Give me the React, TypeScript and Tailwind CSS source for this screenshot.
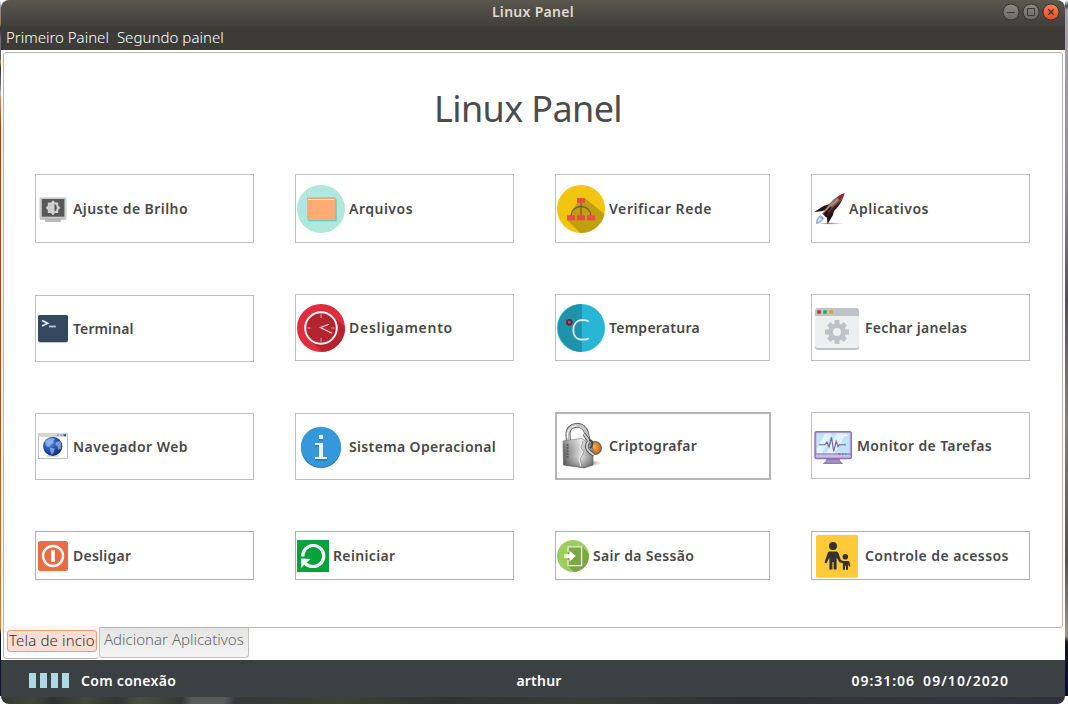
import type { ReactNode } from 'react';

const FONT = "font-['Noto_Sans','Open_Sans',sans-serif]";

function BrightnessIcon() {
  return (
    <svg className="size-8 shrink-0" viewBox="0 0 32 32">
      <rect x="8" y="26" width="16" height="2.5" rx="1" fill="#c4c4c4" />
      <path d="M8 28.3h16" stroke="#999" strokeWidth=".7" />
      <rect x="2.5" y="4.3" width="27" height="22" rx="1" fill="#cfcfcf" />
      <path d="M3 26h26" stroke="#999" strokeWidth=".8" />
      <rect x="4.8" y="6" width="22.6" height="17.7" fill="#585858" />
      <path d="M16 7.2l2.2 2.3h3v3l2.2 2.2-2.2 2.2v3h-3L16 22.2l-2.2-2.3h-3v-3l-2.2-2.2 2.2-2.2v-3h3z" fill="#cfcfcf" />
      <path d="M17.5 11c3 .8 3 6.800 0 7.600z" fill="#585858" />
    </svg>
  );
}

function FilesIcon() {
  return (
    <svg className="size-12 shrink-0" viewBox="0 0 48 48">
      <circle cx="24" cy="24" r="24" fill="#afe8dc" />
      <rect x="11.3" y="14.3" width="28.5" height="22" fill="#6fcbbb" />
      <rect x="10" y="13" width="28.4" height="22" fill="#ffab73" />
      <path d="M10 13h28.4" stroke="#ef9358" strokeWidth=".8" />
      <path d="M11 14.5h26.5" stroke="#fff0e4" strokeWidth="1" />
    </svg>
  );
}

function NetworkIcon() {
  return (
    <svg className="size-12 shrink-0" viewBox="0 0 48 48">
      <clipPath id="net"><circle cx="24" cy="24" r="24" /></clipPath>
      <circle cx="24" cy="24" r="24" fill="#f1c510" />
      <path d="M27.7 13L50 31v20H26.5L10 35l10-17z" fill="#c09e0e" clipPath="url(#net)" />
      <path d="M14.2 31v-1a9.8 8.5 0 0 1 19.6 0v1M24 17v14" fill="none" stroke="#7b5a42" strokeWidth="1.3" />
      <g fill="#e84c42">
        <rect x="20" y="13" width="8" height="4.8" />
        <rect x="10" y="30.3" width="8" height="5" />
        <rect x="20" y="30.3" width="8" height="5" />
        <rect x="30" y="30.3" width="8" height="5" />
      </g>
    </svg>
  );
}

function RocketIcon() {
  return (
    <svg className="size-8 shrink-0" viewBox="0 0 32 32">
      <defs>
        <linearGradient id="hull" x1=".3" y1=".25" x2=".7" y2=".75">
          <stop offset="0" stopColor="#2c1214" />
          <stop offset=".4" stopColor="#b08f8c" />
          <stop offset=".65" stopColor="#4a1d1e" />
          <stop offset="1" stopColor="#170c0d" />
        </linearGradient>
        <radialGradient id="ground">
          <stop offset="0" stopColor="#8d8d8d" />
          <stop offset="1" stopColor="#fff" />
        </radialGradient>
      </defs>
      <ellipse cx="17" cy="30.5" rx="13" ry="1.2" fill="url(#ground)" />
      <path d="M7.500 22l3.500 3c-1 3-3.500 5.300-8 6-.3-3.800 1.500-7 4.500-9z" fill="#93a8d6" />
      <path d="M7 24.5l1.800 1.300c-.8 1.700-2.300 2.700-4.300 3.200.2-2 1-3.500 2.500-4.500z" fill="#dfeaff" />
      <path d="M18.5 10.5L11 12.8 1 19l7.500-.8 6-2zM21.500 15L20 22l-5.500 9.300-.8-9 3-5z" fill="#241214" />
      <path d="M31.700.3C30.500 5.500 27 12 22.500 16.500l-9 8-4.500-3.800 6-8.200C19.500 7 25.500 2 31.700.3z" fill="url(#hull)" />
      <path d="M31.700.3c-3 .9-5.700 2.400-8 4.200l3.300 3.200c2-2.500 3.800-4.700 4.700-7.400z" fill="#8f2c2b" />
      <path d="M18 14l-7 7.500M14.500 18.500l-2 5" stroke="#1d0e10" strokeWidth="1.5" />
    </svg>
  );
}

function TerminalIcon() {
  return (
    <svg className="size-8 shrink-0" viewBox="0 0 32 32">
      <rect x="1" y="2.5" width="30" height="27.5" rx="2" fill="#c9ccd0" />
      <rect x="1" y="2" width="30" height="27" rx="2" fill="#2c3e50" />
      <rect x="1" y="2.3" width="30" height="25.7" rx="2" fill="#34495e" />
      <path d="M5 7.5l5.800 2.800L5 13" fill="none" stroke="#ecf0f1" strokeWidth="1.5" />
      <path d="M12 13.500h6.800" stroke="#bdc9d0" strokeWidth="1.8" />
    </svg>
  );
}

function ClockIcon() {
  return (
    <svg className="size-12 shrink-0" viewBox="0 0 48 48">
      <clipPath id="clk"><circle cx="24" cy="24" r="24" /></clipPath>
      <circle cx="24" cy="24" r="24" fill="#e02d3d" />
      <path d="M35 12l15 13v25H27.5L12 35z" fill="#b5232f" clipPath="url(#clk)" />
      <circle cx="24" cy="24" r="15.8" fill="#b5232f" stroke="#fff" strokeWidth="1.9" />
      <path d="M24 10v4M24 34v4M10 24h4M34 24h4" stroke="#c9747c" strokeWidth="1.6" />
      <path d="M32 20.2l-8.500 3.300L35 29.200" fill="none" stroke="#f6dfe1" strokeWidth="1.2" />
    </svg>
  );
}

function TemperatureIcon() {
  return (
    <svg className="size-12 shrink-0" viewBox="0 0 48 48">
      <circle cx="24" cy="24" r="24" fill="#27b6d3" />
      <path d="M24.8 0A24 24 0 1 0 24.800 48z" fill="#1f93ab" />
      <circle cx="12.3" cy="18.3" r="2.4" fill="none" stroke="#8e1620" strokeWidth="1.9" />
      <path d="M31.8 17.500c-1.500-1-3.500-1.500-6-1.500-6 0-9.500 4-9.500 10s3.500 9.700 9.500 9.700c2.500 0 4.500-.5 6-1.500" fill="none" stroke="#dfe7ea" strokeWidth="1.8" />
    </svg>
  );
}

function WindowGearIcon() {
  return (
    <svg className="size-12 shrink-0" viewBox="0 0 48 48">
      <rect x="2" y="6" width="44" height="40" rx="3" fill="#bdc3c7" />
      <path d="M2 12h44v29a3 3 0 0 1-3 3H5a3 3 0 0 1-3-3z" fill="#ecf0f1" />
      <path d="M2 12V7a3 3 0 0 1 3-3h38a3 3 0 0 1 3 3v5z" fill="#bdc3c7" />
      <circle cx="6" cy="8" r="2" fill="#c0392b" />
      <circle cx="12" cy="8" r="2" fill="#27ae60" />
      <circle cx="18" cy="8" r="2" fill="#f39c12" />
      <g stroke="#bdc3c7" strokeWidth="5">
        <path d="M24 16v24M12 28h24M15.700 19.700l16.600 16.600M32.300 19.700L15.700 36.300" />
      </g>
      <circle cx="24" cy="28" r="8.8" fill="#bdc3c7" />
      <circle cx="24" cy="28" r="4" fill="#ecf0f1" />
    </svg>
  );
}

function BrowserIcon() {
  return (
    <svg className="size-8 shrink-0" viewBox="0 0 32 32">
      <defs>
        <radialGradient id="globe" cx=".35" cy=".3" r=".8">
          <stop offset="0" stopColor="#6e9ce6" />
          <stop offset=".45" stopColor="#2757b4" />
          <stop offset="1" stopColor="#0a2468" />
        </radialGradient>
      </defs>
      <rect x="1.5" y="2.5" width="29" height="25" fill="#fff" stroke="#bdbdbd" />
      <rect x="1.5" y="2" width="29" height="4" fill="#d6d6d6" />
      <path d="M20 4.200h2M23.500 4.200h2" stroke="#7f9fc9" strokeWidth="1.8" />
      <path d="M26.500 4.200h2.500" stroke="#1c4fae" strokeWidth="2" />
      <ellipse cx="15.7" cy="25" rx="7" ry="1.2" fill="#d5d5dd" />
      <circle cx="15.7" cy="15.3" r="9.6" fill="url(#globe)" />
      <path d="M8 11c2-3 5-4.300 8-4l2 1.500-2 1.500 1 1.500-3 2-2 2.500-3-1zM13 16.500l4.500 1-.5 3.500-2 3c-1.500-1.500-2-4.500-2-7.500zM19 11l4-1 1.500 3.500-.5 4-2.500 1.500-1-3.500-2-1.500z" fill="#a6c5f0" opacity=".65" />
    </svg>
  );
}

function InfoIcon() {
  return (
    <svg className="size-12 shrink-0" viewBox="0 0 48 48">
      <circle cx="24" cy="25" r="20" fill="#2980b9" />
      <circle cx="24" cy="23.7" r="20" fill="#3498db" />
      <g fill="#2980b9">
        <rect x="22" y="13.5" width="4" height="4" />
        <rect x="18" y="34" width="12" height="4" />
        <rect x="18" y="21" width="4" height="2.5" />
      </g>
      <g fill="#ecf0f1">
        <rect x="22" y="12" width="4" height="4" />
        <rect x="18" y="20" width="8" height="2" />
        <rect x="22" y="20" width="4" height="14" />
        <rect x="18" y="34" width="12" height="2" />
      </g>
    </svg>
  );
}

function PadlockIcon() {
  return (
    <svg className="size-12 shrink-0" viewBox="0 0 48 48">
      <defs>
        <linearGradient id="steel" x1="0" y1="0" x2="1" y2="0">
          <stop offset="0" stopColor="#5a5a5a" />
          <stop offset=".25" stopColor="#9d9d9d" />
          <stop offset=".6" stopColor="#e2e2e2" />
          <stop offset="1" stopColor="#808080" />
        </linearGradient>
        <linearGradient id="shade" x1="0" y1="0" x2="0" y2="1">
          <stop offset="0" stopColor="#fff" stopOpacity=".4" />
          <stop offset=".6" stopColor="#777" stopOpacity="0" />
          <stop offset="1" stopColor="#222" stopOpacity=".45" />
        </linearGradient>
        <radialGradient id="amber" cx=".4" cy=".4">
          <stop offset="0" stopColor="#ffb04d" />
          <stop offset="1" stopColor="#d86f14" />
        </radialGradient>
        <radialGradient id="fall">
          <stop offset="0" stopColor="#999" />
          <stop offset="1" stopColor="#fff" />
        </radialGradient>
      </defs>
      <ellipse cx="34" cy="41" rx="11" ry="3" fill="url(#fall)" />
      <circle cx="38" cy="26" r="6.3" fill="url(#amber)" stroke="#666" strokeWidth="1.3" />
      <path d="M11.500 20l-.5-7c-.5-12 16-13 18.500-2l1.500 7" fill="none" stroke="#5d5d5d" strokeWidth="5" />
      <path d="M11.500 20l-.5-7c-.5-12 16-13 18.500-2l1.500 7" fill="none" stroke="#c4c4c4" strokeWidth="3.4" />
      <path d="M10.500 16v-4c.5-5 4-8 9-8.300" fill="none" stroke="#fff" strokeWidth="1" />
      <path d="M6 19l19-2.500L31 21l5 5v17l-9 3L6.500 43z" fill="url(#steel)" stroke="#5a5a5a" strokeWidth=".6" />
      <path d="M6 19l19-2.500L31 21l5 5v17l-9 3L6.500 43z" fill="url(#shade)" />
      <path d="M10.500 22v14" stroke="#66605a" strokeWidth="2" strokeDasharray="2 1" />
      <path d="M25 19l-2 7 3 4-4 7 2 7" fill="none" stroke="#f0f0f0" strokeWidth="1.2" />
      <path d="M26 19l-2 7 3 4-4 7 2 7" fill="none" stroke="#777" strokeWidth=".6" />
      <path d="M27 12l5 7c-3 4-3 8 1 11l4 3" fill="none" stroke="#555" strokeWidth="3.6" />
      <path d="M27 12l5 7c-3 4-3 8 1 11l4 3" fill="none" stroke="#ccc" strokeWidth="2" />
      <path d="M32 18c5 1 4 6 1 8" fill="none" stroke="#454545" strokeWidth="1.8" />
    </svg>
  );
}

function MonitorIcon() {
  return (
    <svg className="size-10 shrink-0" viewBox="0 0 40 40">
      <path d="M14 33h12l1 2.500 2.500 2h-19L13 35.500z" fill="#a48fc0" stroke="#7d669f" strokeWidth=".8" />
      <rect x="2" y="5.8" width="36.3" height="26.7" rx="1.8" fill="#c9bdea" stroke="#8972ad" strokeWidth="1.4" />
      <rect x="3.8" y="7.5" width="32.7" height="19.7" fill="#c1e3fa" />
      <path d="M12 7.500h7L9 27.200H4V23zM24 7.500h9L22 27.200h-9z" fill="#e1f3ff" />
      <path d="M2 28h36" stroke="#8972ad" strokeWidth=".9" />
      <path d="M6 18.700h6l2-2.700 2 5 2.500-9.700 2.200 14 2.500-10 1.800 5.500 1.300-2H33" fill="none" stroke="#76609c" strokeWidth="1.1" />
      <path d="M25 28h2.500" stroke="#e05a6c" strokeWidth="2" />
      <path d="M29 28h1.500" stroke="#36aaa5" strokeWidth="2" />
      <path d="M32 28h1.500" stroke="#4e9cda" strokeWidth="2" />
      <path d="M32 9.200h2.500" stroke="#fff" strokeWidth="1.5" />
    </svg>
  );
}

function PowerIcon() {
  return (
    <svg className="size-8 shrink-0" viewBox="0 0 32 32">
      <rect x="1" y="1" width="30" height="30" rx="2.5" fill="#e96a43" />
      <circle cx="16" cy="16" r="10" fill="none" stroke="#fff" strokeWidth="2.4" />
      <path d="M16 10.300v11.700" stroke="#fff" strokeWidth="3.6" />
    </svg>
  );
}

function RestartIcon() {
  return (
    <svg className="size-8 shrink-0" viewBox="0 0 32 32">
      <rect width="32" height="32" fill="#06a23c" />
      <path d="M5.800 16.500A10.500 10.500 0 1 1 16.300 26.500c-3.500 0-6-1-8-3" fill="none" stroke="#fff" strokeWidth="3.2" />
      <path d="M4 18.500l9.500.5L4 28z" fill="#fff" />
    </svg>
  );
}

function ExitIcon() {
  return (
    <svg className="size-8 shrink-0" viewBox="0 0 32 32">
      <clipPath id="out"><circle cx="16" cy="16" r="16" /></clipPath>
      <circle cx="16" cy="16" r="16" fill="#9bcf5c" />
      <path d="M25 6.500l8 8V33H18l-7.500-7.500z" fill="#7ca64a" clipPath="url(#out)" />
      <path d="M11 12V6.800h13.600v18.800H11V20" fill="#7ca64a" stroke="#e4efd8" strokeWidth="1.3" />
      <path d="M7.200 14.200h5.300v-3.500l6.200 5.300-6.200 5.400v-3.500H7.200z" fill="#fff" />
    </svg>
  );
}

function ParentalIcon() {
  return (
    <svg className="size-12 shrink-0" viewBox="0 0 48 48">
      <rect x="3" y="4" width="42" height="42" rx="1.5" fill="#d5d5d5" />
      <rect x="3" y="3" width="42" height="42" rx="1.5" fill="#ffca38" />
      <g fill="#333">
        <circle cx="20" cy="14" r="4" />
        <path d="M17 19.500h6c1.300 0 2 .6 2.400 1.800l3 8.200-1.800 1-3-5V37.500h-3V30h-1.200v7.500h-3V25.500l-3 6-1.900-1 3.100-9.200c.4-1.200 1.100-1.800 2.400-1.800z" />
        <circle cx="32.3" cy="24.7" r="2.8" />
        <path d="M28 28.300l2.500.7h4.200c1 0 1.500.4 1.800 1.200l1 4-1.200.5-1.300-2.500v5.500h-2v-4h-.9v4h-2.200v-6.500l-3-1z" />
      </g>
    </svg>
  );
}

type Launcher = { label: string; icon: ReactNode; box: string; text: string };

const columns: { width: string; items: Launcher[] }[] = [
  {
    width: 'w-[219px] mr-[41px]',
    items: [
      { label: 'Ajuste de Brilho', icon: <BrightnessIcon />, box: 'h-[69px] mb-[52px]', text: 'tracking-[0.43px]' },
      { label: 'Terminal', icon: <TerminalIcon />, box: 'h-[67px] mb-[51px]', text: 'tracking-[0.1px]' },
      { label: 'Navegador Web', icon: <BrowserIcon />, box: 'h-[67px] mb-[51px]', text: 'tracking-[0.45px]' },
      { label: 'Desligar', icon: <PowerIcon />, box: 'h-[49px] border-[#b0b0b0]', text: 'tracking-[0.25px]' },
    ],
  },
  {
    width: 'w-[219px] mr-[41px]',
    items: [
      { label: 'Arquivos', icon: <FilesIcon />, box: 'h-[69px] mb-[51px]', text: 'tracking-[0.5px]' },
      { label: 'Desligamento', icon: <ClockIcon />, box: 'h-[67px] mb-[52px]', text: 'tracking-[0.74px]' },
      { label: 'Sistema Operacional', icon: <InfoIcon />, box: 'h-[67px] mb-[51px]', text: 'tracking-[0.35px]' },
      { label: 'Reiniciar', icon: <RestartIcon />, box: 'h-[49px] border-[#b0b0b0]', text: 'tracking-[0.35px]' },
    ],
  },
  {
    width: 'w-[215px] mr-[41px]',
    items: [
      { label: 'Verificar Rede', icon: <NetworkIcon />, box: 'h-[69px] mb-[51px]', text: 'tracking-[0.57px]' },
      { label: 'Temperatura', icon: <TemperatureIcon />, box: 'h-[67px] mb-[51px]', text: 'tracking-[0.25px]' },
      { label: 'Criptografar', icon: <PadlockIcon />, box: 'h-[68px] w-[216px] border-2 border-[#b5b5b5] pl-0 pt-0 mb-[51px]', text: 'tracking-[0.33px]' },
      { label: 'Sair da Sessão', icon: <ExitIcon />, box: 'h-[49px] border-[#b0b0b0]', text: 'tracking-[0.33px]' },
    ],
  },
  {
    width: 'w-[219px]',
    items: [
      { label: 'Aplicativos', icon: <RocketIcon />, box: 'h-[69px] mb-[51px]', text: 'tracking-[0.53px]' },
      { label: 'Fechar janelas', icon: <WindowGearIcon />, box: 'h-[67px] mb-[51px]', text: 'tracking-[0.3px]' },
      { label: 'Monitor de Tarefas', icon: <MonitorIcon />, box: 'h-[67px] mb-[52px]', text: 'tracking-[0.36px]' },
      { label: 'Controle de acessos', icon: <ParentalIcon />, box: 'h-[49px] border-[#b0b0b0]', text: 'tracking-[0.43px]' },
    ],
  },
];

function LaunchButton({ label, icon, box, text }: Launcher) {
  const border = box.includes('border-') ? '' : 'border-[#bfbfbf]';
  const inset = box.includes('pl-0') ? '' : 'border pl-px pt-px';
  return (
    <button className={`flex items-center gap-1 bg-white text-left ${inset} ${border} ${box}`}>
      {icon}
      <span className={`text-[14px] leading-5 font-semibold whitespace-nowrap text-[#484848] ${text}`}>{label}</span>
    </button>
  );
}

function WindowControls() {
  return (
    <svg className="mr-1 h-5 w-[60px]" viewBox="0 0 60 20">
      <defs>
        <linearGradient id="grey" x1="0" y1="0" x2="0" y2="1">
          <stop offset="0" stopColor="#8b8982" />
          <stop offset="1" stopColor="#6b6963" />
        </linearGradient>
        <linearGradient id="orange" x1="0" y1="0" x2="0" y2="1">
          <stop offset="0" stopColor="#f5805a" />
          <stop offset="1" stopColor="#e5501f" />
        </linearGradient>
      </defs>
      <circle cx="10" cy="10" r="8" fill="url(#grey)" stroke="#35332e" />
      <circle cx="30" cy="10" r="8" fill="url(#grey)" stroke="#35332e" />
      <circle cx="50" cy="10" r="8" fill="url(#orange)" stroke="#35332e" />
      <path d="M6 10.500h8M26.500 6.500h7v7h-7z" fill="none" stroke="#3b3934" />
      <path d="M47.300 7.300l5.400 5.400M52.700 7.300l-5.400 5.400" stroke="#4a2c20" strokeWidth="1.3" />
    </svg>
  );
}

export default function App() {
  return (
    <div className={`flex h-[704px] w-[1068px] overflow-hidden bg-white ${FONT}`}>
      <div className="h-[696px] w-px shrink-0 bg-[linear-gradient(to_bottom,#fff_0px,#8a8a92_8px,#a87848_24px,#2b2b30_28px,#77777c_40px,#55555a_58px,#d08a30_62px,#303036_68px,#66666c_84px,#b9b9bd_94px,#c98650_98px,#b8400d_125px,#c2480f_400px,#e07a2c_628px,#0c1230_634px,#0c1230_690px)]" />

      <div className="flex w-[1064px] shrink-0 flex-col overflow-hidden rounded-t-lg rounded-b-lg bg-white">
        <header className="grid h-[26px] shrink-0 grid-cols-[1fr_auto_1fr] items-center bg-linear-to-b from-[#5b574e] to-[#403f3a]">
          <span />
          <h1 className="pb-0.5 text-[14px] leading-5 font-semibold tracking-[0.3px] text-[#dfdbd2]">Linux Panel</h1>
          <div className="flex justify-end pb-0.5"><WindowControls /></div>
        </header>
        <nav className="flex h-6 shrink-0 items-center gap-2 bg-[#3c3b37] pb-0.5 pl-[5px] text-[15px] leading-5 font-light text-white">
          <span>Primeiro Painel</span>
          <span className="tracking-[0.05px]">Segundo painel</span>
        </nav>

        <main className="mt-0.5 ml-0.5 flex h-[576px] w-[1060px] shrink-0 flex-col rounded-[3px] border border-[#b8b3ae] bg-white">
          <h2 className="mt-[30px] pr-[10px] text-center text-[36px] leading-[52px] font-normal tracking-[-0.62px] text-[#4c4c4c]">Linux Panel</h2>
          <div className="mt-[39px] ml-[31px] flex items-start">
            {columns.map((column, index) => (
              <div key={index} className={`flex shrink-0 flex-col ${column.width}`}>
                {column.items.map((item) => (
                  <div key={item.label} className="flex flex-col">
                    <LaunchButton {...item} />
                  </div>
                ))}
              </div>
            ))}
          </div>
        </main>

        <div className="flex h-8 shrink-0 items-start pl-0.5 text-[15px] font-light">
          <div className="-mt-0.5 h-[33px] w-[96px] rounded-b border-b border-l border-[#b8b3ae] bg-linear-to-b from-[#f7f7f7] to-white pt-1 pl-[3px]">
            <div className="flex h-[22px] w-[90px] items-center rounded-[3px] border border-[#f09a7a] bg-[#f8dfd5] pb-0.5 pl-px leading-5 tracking-[0.15px] whitespace-nowrap text-[#303030]">
              Tela de incio
            </div>
          </div>
          <div className="flex h-[30px] w-[150px] items-start rounded-b border border-t-0 border-[#c4c0bc] bg-linear-to-b from-[#e4e4e4] to-[#f5f5f5] pl-1 leading-[22px] whitespace-nowrap text-[#666]">
            Adicionar Aplicativos
          </div>
        </div>

        <footer className="grid h-[37px] shrink-0 grid-cols-[1fr_auto_1fr] items-center bg-[#3b4043] text-[14px] leading-5 font-semibold text-white">
          <div className="flex items-center pt-1 pl-7">
            <div className="flex gap-1">
              <i className="h-[15px] w-[7px] bg-[#add8e6]" />
              <i className="h-[15px] w-[7px] bg-[#add8e6]" />
              <i className="h-[15px] w-[7px] bg-[#add8e6]" />
              <i className="h-[15px] w-[7px] bg-[#add8e6]" />
            </div>
            <span className="ml-3 tracking-[0.3px]">Com conexão</span>
          </div>
          <span className="pt-1 pl-3 tracking-[0.2px]">arthur</span>
          <div className="flex justify-end gap-2 pt-1 pr-[56px]">
            <span className="tracking-[0.97px]">09:31:06</span>
            <span className="tracking-[1.07px]">09/10/2020</span>
          </div>
        </footer>
        <div className="h-[7px] bg-[linear-gradient(100deg,#343833_0%,#41463a_3%,#2e3231_5%,#434839_8%,#303432_11%,#4a4f42_13%,#343736_17%,#5a5c5b_18%,#5a5c5b_21%,#35383a_22%,#3d4136_32%,#2f3333_42%,#3a3d38_55%,#2e3134_70%,#34363b_85%,#30303c_100%)]" />
      </div>

      <div className="h-[696px] w-[3px] bg-[linear-gradient(to_bottom,#fff_0px,#4a4450_6px,#aaa3ac_10px,#948c96_180px,#57505c_300px,#8a8078_420px,#5c5248_560px,#a09484_636px,#14141c_642px,#0b0b3a_690px)]" />
    </div>
  );
}
